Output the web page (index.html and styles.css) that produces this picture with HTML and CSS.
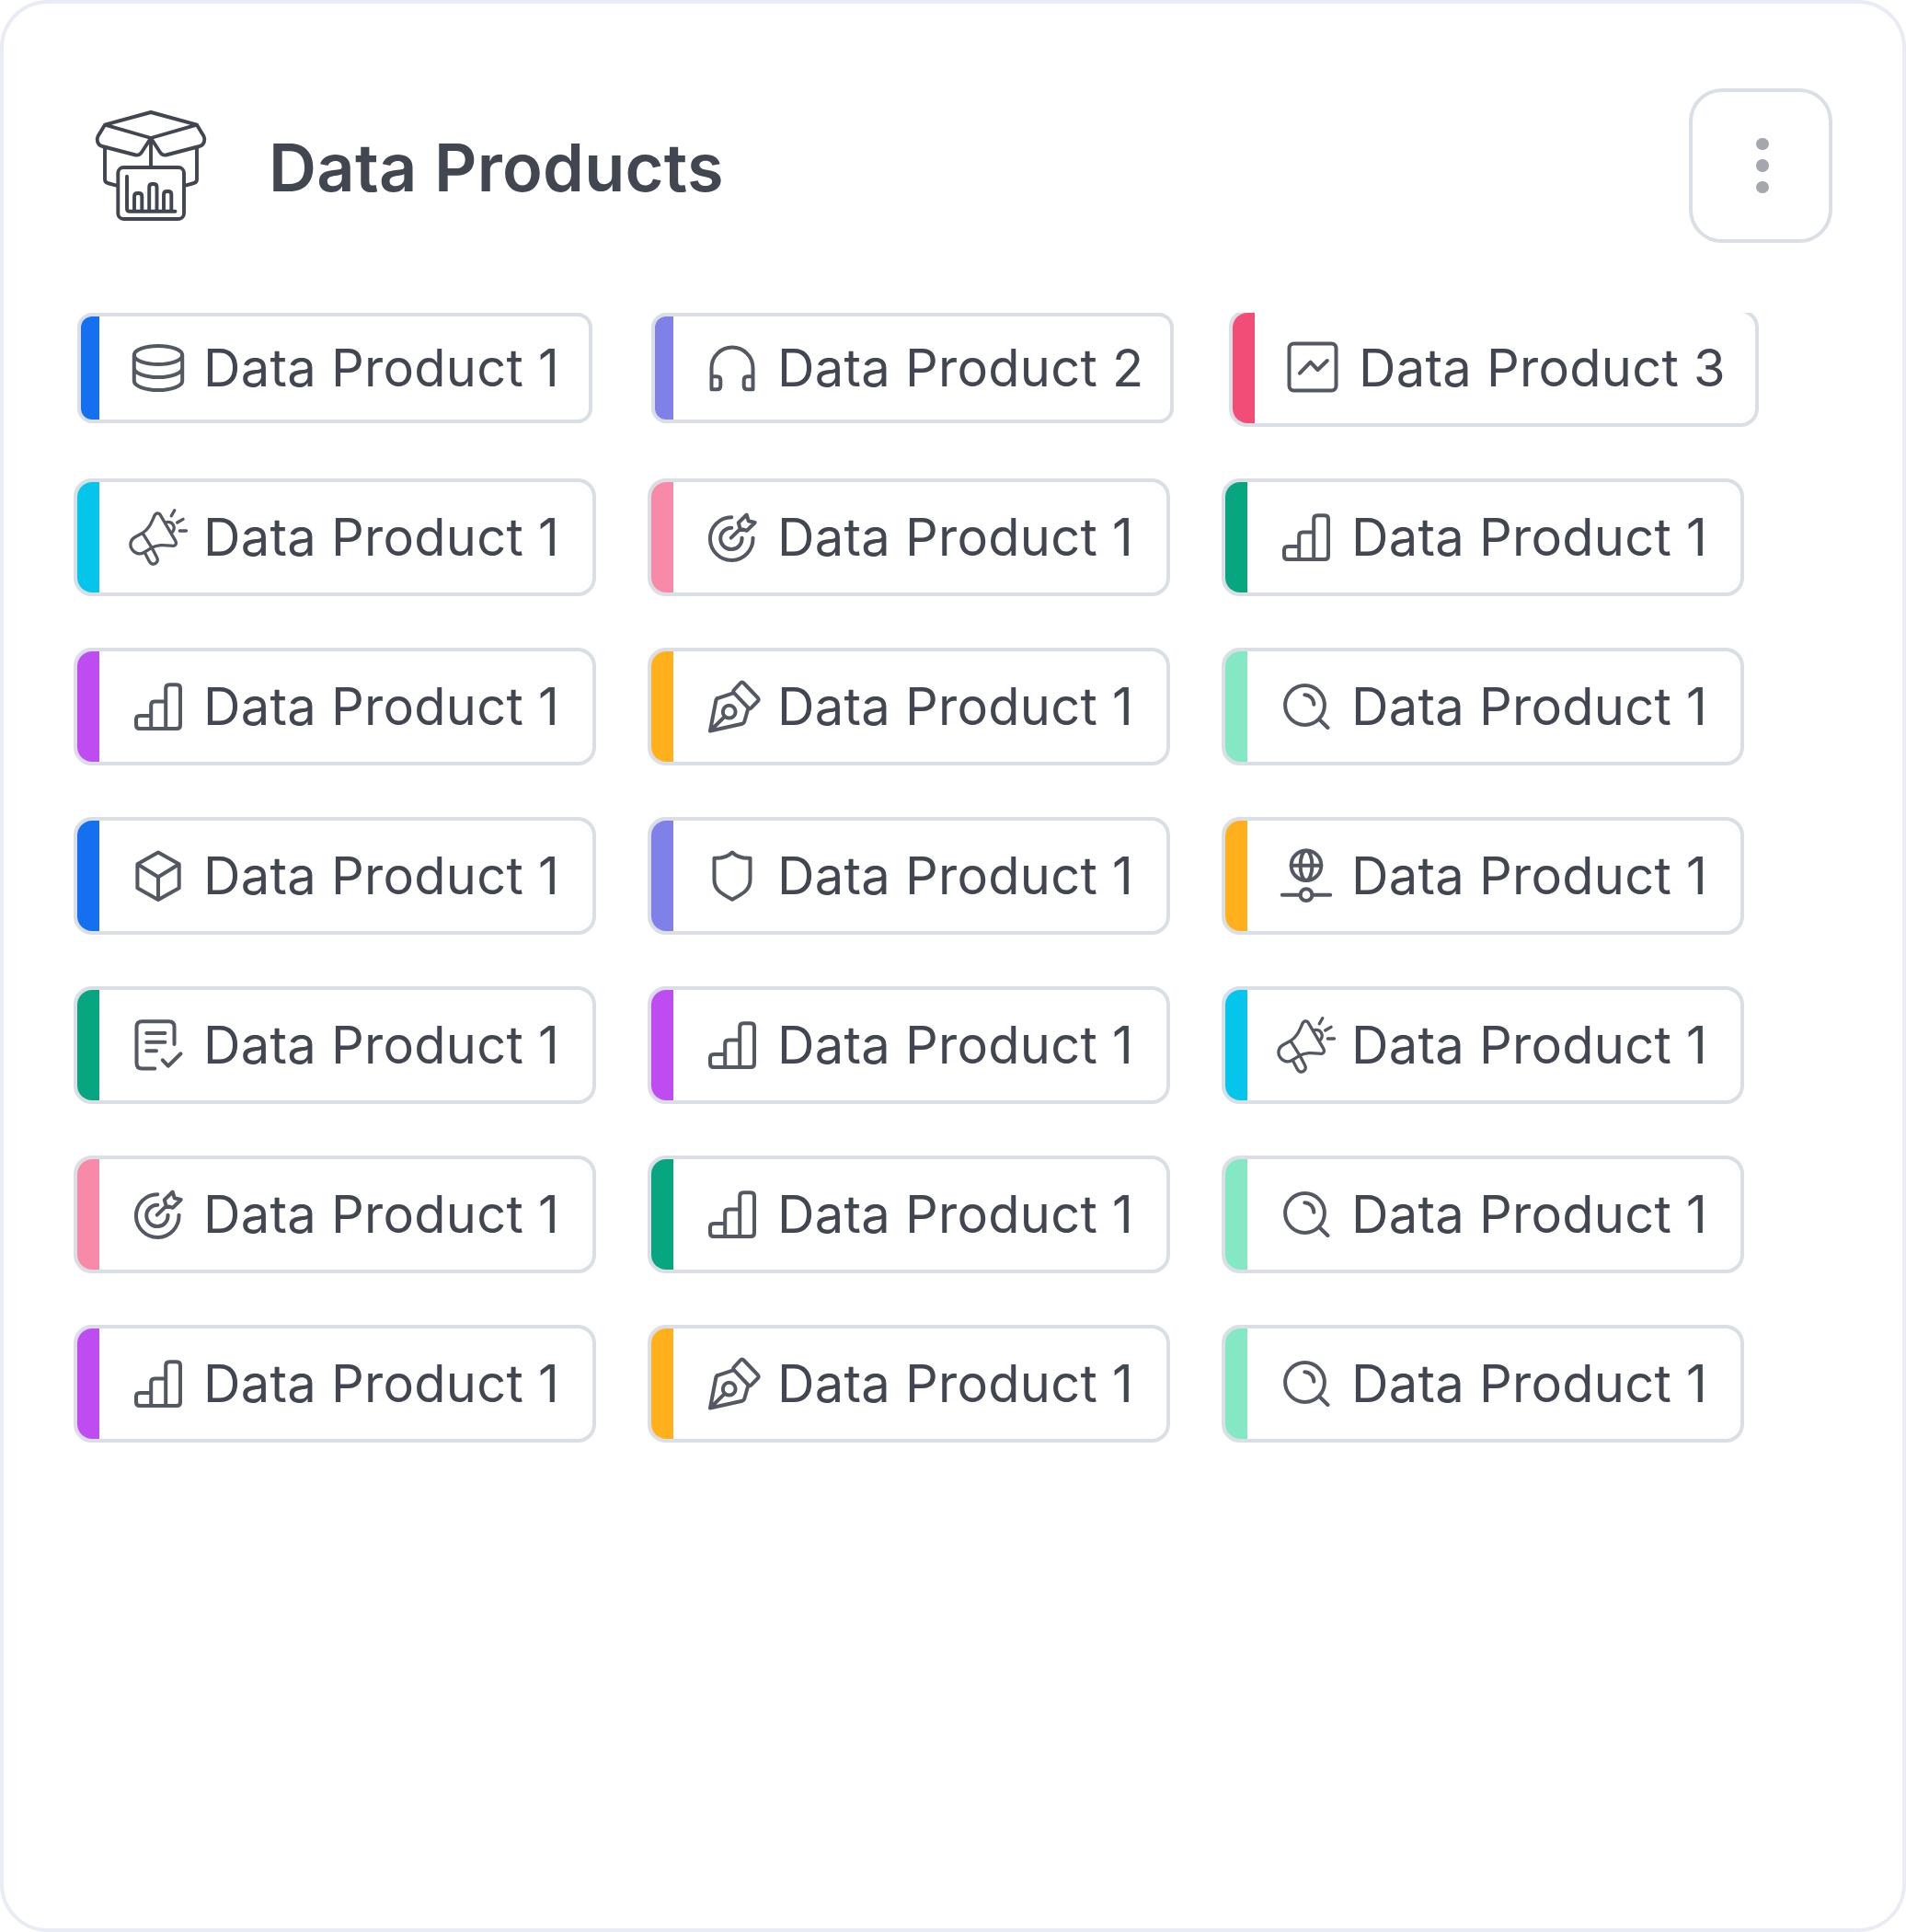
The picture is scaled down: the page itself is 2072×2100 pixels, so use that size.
FILE: index.html
```html
<!DOCTYPE html>
<html lang="en">
<head>
<meta charset="utf-8">
<title>Data Products</title>
<link rel="stylesheet" href="styles.css">
</head>
<body>
<svg class="sprite" aria-hidden="true">
  <symbol id="database" viewBox="0 0 64 64"><ellipse cx="32" cy="18" rx="26.2" ry="10"/><path d="M5.8 18v28c0 5.5 11.7 10 26.2 10s26.2-4.5 26.2-10V18M5.8 32c0 5.5 11.7 10 26.2 10s26.2-4.5 26.2-10"/></symbol>
  <symbol id="headphones" viewBox="0 0 64 64"><path d="M9.5 55.3V32a22.5 22.5 0 0 1 45 0v23.3h-6q-3.8 0-3.8-4v-6q0-4 3.8-4h6M9.5 55.3h6q3.8 0 3.8-4v-6q0-4-3.8-4h-6"/></symbol>
  <symbol id="chart" viewBox="0 0 64 64"><rect x="5.5" y="5.5" width="51" height="51" rx="5"/><path d="M17 37.7l11.600-12 7.900 8.300 10.300-10"/></symbol>
  <symbol id="megaphone" viewBox="0 0 64 64"><g stroke-width="3.3"><path d="M15 27.3C21.500 23.500 24 17.500 27.500 9.500C29 5 33 4.600 34.800 8.600L50.600 35.600C52.400 39 50.800 41.600 48 41.300C39 40.600 32 39.600 25 43.300ZM15 27.300L6.500 32C2 34.600.6 40 3.200 44.600S11.500 51.300 16 48.700L25 43.300L30.400 53.500c1.800 3.200.6 5.900-1.600 7s-4.900.4-6.300-2.100L17.700 49.300M39.700 16.300a5.800 5.800 0 1 1 6.300 11M49.700 2.700l-3.400 6M59 12.300L52.700 16M55.300 25h7.200"/></g></symbol>
  <symbol id="target" viewBox="0 0 64 64"><path d="M31.300 10.300A23.300 23.300 0 1 0 54.500 32.700M31.300 21.700A11.700 11.700 0 1 0 42.600 32.700M30.700 32.700l10-9.900M47.700 7.500l2 6.700 7 1.800-8.700 8.700-7.300-1.900-2-6.600z"/></symbol>
  <symbol id="bars" viewBox="0 0 64 64"><path d="M40.200 56V12.200q0-4 4-4h7.800q4 0 4 4V52q0 4-4 4H12q-4 0-4-4v-6q0-4 4-4h12.200M24.200 56V30.600q0-4 4-4h12"/></symbol>
  <symbol id="pen" viewBox="0 0 64 64"><path d="M8 58.500l6.300-33q.4-2.200 2.400-2.700l17.200-5.600 15.600 16.300-4.300 15q-.5 1.700-2.300 2.200L8 58.500l15.800-15.700M33.900 17.200q-1.400-1.600 0-3.200l7-7.500q1.800-1.900 3.600 0L59.700 22.300q1.800 1.900 0 3.800l-7 7.300q-1.600 1.600-3.200.1"/><circle cx="28.700" cy="37.700" r="6.900"/></symbol>
  <symbol id="search" viewBox="0 0 64 64"><circle cx="30.500" cy="30.500" r="21.400"/><path d="M46.200 46l9.200 9M30.300 19.200a10.200 10.200 0 0 1 10 10.500"/></symbol>
  <symbol id="cube" viewBox="0 0 64 64"><path d="M32 6.600L54.700 19.300v26L32 58 9.400 45.300v-26zM9.400 19.300L32 33.300l22.700-14M32 33.300V58"/></symbol>
  <symbol id="shield" viewBox="0 0 64 64"><path d="M32 6.500c-4 4-9.500 6.700-19.500 6.300V36.500C12.500 47 20 51 32 57.800 44 51 51.500 47 51.500 36.500V12.800C41.500 13.200 36 10.500 32 6.500z"/></symbol>
  <symbol id="globe" viewBox="0 0 64 64"><circle cx="32" cy="20.700" r="16.300"/><ellipse cx="32" cy="20.700" rx="6.400" ry="16.300"/><path d="M15.700 20.700h32.600M5.800 52.700h19.800M38.400 52.700h19.800"/><circle cx="32" cy="52.700" r="6.400"/></symbol>
  <symbol id="document" viewBox="0 0 64 64"><path d="M28.300 57.400H14.500q-6 0-6-6V12.300q0-6 6-6h29q6 0 6 6V31M19.300 19h20.100M19.300 28.700h20.100M19.300 38.300H30M36.800 48.300l6 6.400 13.700-13.400"/></symbol>
</svg>

<main class="card">
  <header class="header">
    <svg class="product-icon" viewBox="0 0 136 136">
      <path d="M68 10L118 23.700 68 38 18 23.700ZM18 23.700L10.500 36C8.500 40 10 45.500 15 47L51.500 56.500Q55.500 57.300 58 53.500L68 38L78 53.500Q80.500 57.300 84.500 56.500L121 47C126 45.500 127.500 40 125.500 36L118 23.700M68 38V70M18 48V83Q18 86 21 87L30.500 89.600M118 48V83Q118 86 115 87L105.500 89.600"/>
      <rect x="32.300" y="70" width="71.700" height="56" rx="6"/>
      <path d="M42 79.800V114.700Q42 117.700 45 117.700H94.500M50 117V101.500Q50 98 53.500 98H54.800Q58.300 98 58.300 101.500V117M66.200 117V91.500Q66.200 88 69.700 88H71Q74.500 88 74.500 91.500V117M82 117V99.500Q82 96 85.500 96H86.800Q90.300 96 90.300 99.500V117"/>
    </svg>
    <h1 class="title">Data Products</h1>
    <button class="menu" aria-label="More options"><span class="dot"></span><span class="dot"></span><span class="dot"></span></button>
  </header>
  <div class="scroller">
    <div class="grid">
      <div class="chip inset blue"><svg class="icon"><use href="#database"/></svg>Data Product 1</div>
      <div class="chip inset wide violet"><svg class="icon"><use href="#headphones"/></svg>Data Product 2</div>
      <div class="chip shifted rose"><svg class="icon"><use href="#chart"/></svg>Data Product 3</div>
      <div class="chip cyan"><svg class="icon"><use href="#megaphone"/></svg>Data Product 1</div>
      <div class="chip pink"><svg class="icon"><use href="#target"/></svg>Data Product 1</div>
      <div class="chip green"><svg class="icon"><use href="#bars"/></svg>Data Product 1</div>
      <div class="chip purple"><svg class="icon"><use href="#bars"/></svg>Data Product 1</div>
      <div class="chip amber"><svg class="icon"><use href="#pen"/></svg>Data Product 1</div>
      <div class="chip mint"><svg class="icon"><use href="#search"/></svg>Data Product 1</div>
      <div class="chip blue"><svg class="icon"><use href="#cube"/></svg>Data Product 1</div>
      <div class="chip violet"><svg class="icon"><use href="#shield"/></svg>Data Product 1</div>
      <div class="chip amber"><svg class="icon"><use href="#globe"/></svg>Data Product 1</div>
      <div class="chip green"><svg class="icon"><use href="#document"/></svg>Data Product 1</div>
      <div class="chip purple"><svg class="icon"><use href="#bars"/></svg>Data Product 1</div>
      <div class="chip cyan"><svg class="icon"><use href="#megaphone"/></svg>Data Product 1</div>
      <div class="chip pink"><svg class="icon"><use href="#target"/></svg>Data Product 1</div>
      <div class="chip green"><svg class="icon"><use href="#bars"/></svg>Data Product 1</div>
      <div class="chip mint"><svg class="icon"><use href="#search"/></svg>Data Product 1</div>
      <div class="chip purple"><svg class="icon"><use href="#bars"/></svg>Data Product 1</div>
      <div class="chip amber"><svg class="icon"><use href="#pen"/></svg>Data Product 1</div>
      <div class="chip mint"><svg class="icon"><use href="#search"/></svg>Data Product 1</div>
    </div>
  </div>
</main>
</body>
</html>
```
FILE: styles.css
```css
* { box-sizing: border-box; }

body {
  margin: 0;
  background: #fff;
  color: #414651;
  font-family: Inter, "Liberation Sans", sans-serif;
}

.sprite { display: none; }

.card {
  height: 2100px;
  padding: 92px 76px;
  background: #fff;
  border: 4px solid #e9ebf5;
  border-radius: 52px;
}

.header {
  display: flex;
  align-items: flex-start;
  height: 244px;
  padding-left: 16px;
}

.product-icon {
  width: 136px;
  height: 136px;
  margin-top: 16px;
  fill: none;
  stroke: #414651;
  stroke-width: 3.9;
  stroke-linecap: round;
  stroke-linejoin: round;
}

.title {
  flex: 1;
  margin: 30px 0 0 60px;
  font-size: 72px;
  font-weight: 600;
  letter-spacing: 0.27px;
  line-height: 112px;
}

.menu {
  display: flex;
  flex-direction: column;
  align-items: center;
  justify-content: center;
  gap: 10px;
  width: 156px;
  height: 168px;
  padding: 0 0 0 4px;
  background: none;
  border: 4px solid #dadfe6;
  border-radius: 36px;
}

.dot {
  width: 13.4px;
  height: 13.4px;
  background: #a4a7ae;
  border-radius: 50%;
}

.scroller { overflow: hidden; }

.grid {
  display: grid;
  grid-template-columns: repeat(3, 568px);
  grid-auto-rows: 128px;
  gap: 56px;
  margin-top: -4px;
}

.chip {
  display: flex;
  align-items: center;
  gap: 17px;
  padding-left: 32px;
  border: 4px solid #dadfe6;
  border-radius: 20px;
  font-size: 56px;
  letter-spacing: 0.27px;
  line-height: 80px;
  white-space: nowrap;
}

.chip::before {
  content: "";
  align-self: stretch;
  flex: none;
  width: 24px;
  margin: 0 15px 0 -32px;
  background: var(--accent);
  border-radius: 16px 0 0 16px;
}

.chip.inset {
  margin: 4px;
  border-radius: 16px;
}
.chip.inset::before {
  width: 20px;
  border-radius: 12px 0 0 12px;
}
.chip.wide { margin-right: -4px; }
.chip.shifted { margin: 0 -16px 0 8px; }

.blue { --accent: #1570ef; }
.violet { --accent: #7f81e9; }
.rose { --accent: #f24d76; }
.cyan { --accent: #06c5eb; }
.pink { --accent: #f68aa8; }
.green { --accent: #08a680; }
.purple { --accent: #be4cf1; }
.amber { --accent: #ffb01c; }
.mint { --accent: #84e8c5; }

.icon {
  flex: none;
  width: 64px;
  height: 64px;
  fill: none;
  stroke: #535862;
  stroke-width: 4;
  stroke-linecap: round;
  stroke-linejoin: round;
}
```
